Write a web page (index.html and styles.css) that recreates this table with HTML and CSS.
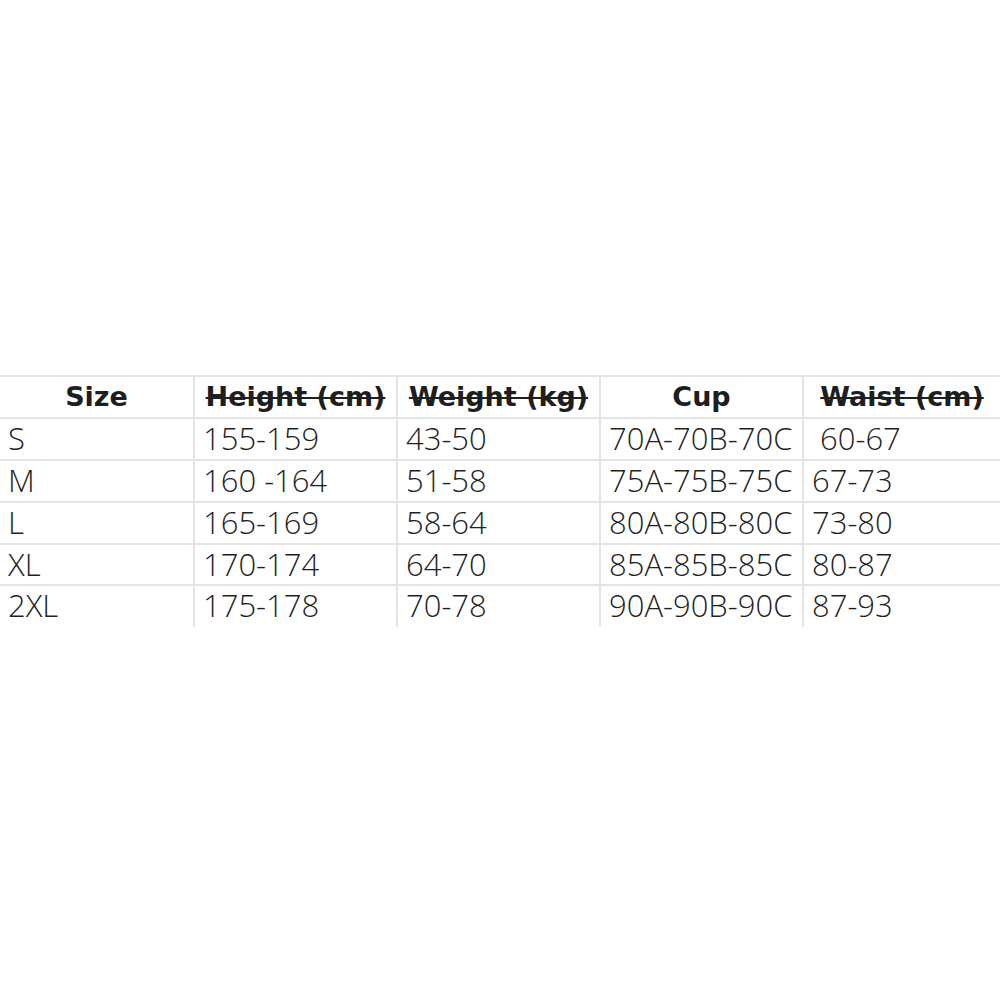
FILE: index.html
```html
<!DOCTYPE html>
<html>
<head>
<meta charset="utf-8">
<link rel="stylesheet" href="styles.css">
</head>
<body>
<div class="page">
  <div class="chart">
    <div class="cell head">Size</div>
    <div class="cell head strike">Height (cm)</div>
    <div class="cell head strike">Weight (kg)</div>
    <div class="cell head">Cup</div>
    <div class="cell head strike last">Waist (cm)</div>

    <div class="cell">S</div>
    <div class="cell">155-159</div>
    <div class="cell">43-50</div>
    <div class="cell">70A-70B-70C</div>
    <div class="cell last">&nbsp;60-67</div>

    <div class="cell">M</div>
    <div class="cell">160 -164</div>
    <div class="cell">51-58</div>
    <div class="cell">75A-75B-75C</div>
    <div class="cell last">67-73</div>

    <div class="cell">L</div>
    <div class="cell">165-169</div>
    <div class="cell">58-64</div>
    <div class="cell">80A-80B-80C</div>
    <div class="cell last">73-80</div>

    <div class="cell">XL</div>
    <div class="cell">170-174</div>
    <div class="cell">64-70</div>
    <div class="cell">85A-85B-85C</div>
    <div class="cell last">80-87</div>

    <div class="cell end">2XL</div>
    <div class="cell end">175-178</div>
    <div class="cell end">70-78</div>
    <div class="cell end">90A-90B-90C</div>
    <div class="cell end last">87-93</div>
  </div>
</div>
</body>
</html>
```
FILE: styles.css
```css
html, body {
  margin: 0;
  padding: 0;
  background: #ffffff;
}
.page {
  width: 1000px;
  height: 1000px;
  padding-top: 375px;
  box-sizing: border-box;
  overflow: hidden;
}
.chart {
  display: grid;
  grid-template-columns: 195px 203px 203px 203px 196px;
  grid-template-rows: 42px 42px 42px 42px 41px 41px;
  border-top: 2px solid #e4e4e4;
  font-family: "Open Sans", "Noto Sans", sans-serif;
  font-weight: 300;
  font-size: 31px;
  color: #1f1f1f;
}
.cell {
  border-right: 2px solid #e4e4e4;
  border-bottom: 2px solid #e4e4e4;
  padding-left: 8px;
  line-height: 38px;
  white-space: nowrap;
  overflow: visible;
}
.cell.last {
  border-right: none;
}
.cell.end {
  border-bottom: none;
}
.head {
  font-family: "DejaVu Sans", sans-serif;
  font-weight: bold;
  font-size: 27px;
  color: #1e1e1e;
  text-align: center;
  padding-left: 0;
  line-height: 40px;
}
.strike {
  text-decoration: line-through;
  text-decoration-thickness: 2px;
}
```
